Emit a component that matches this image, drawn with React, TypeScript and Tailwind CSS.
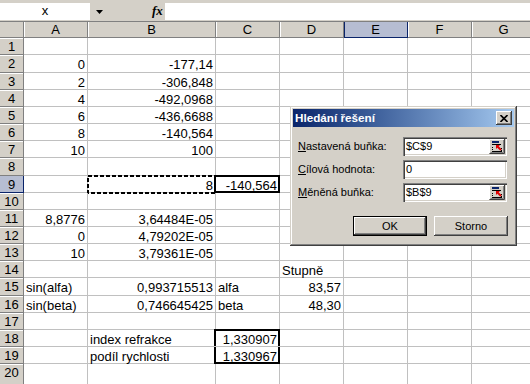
import React from "react";

type Cell = { v: string; al: "l" | "r" };

const COLS = ["A", "B", "C", "D", "E", "F", "G"];
const COL_W: Record<string, string> = {
  A: "w-[64px]",
  B: "w-[128px]",
  C: "w-[64px]",
  D: "w-[64px]",
  E: "w-[64px]",
  F: "w-[64px]",
  G: "w-[64px]",
};

// row heights tuned to the screenshot (zoom is not exactly 100%), last row runs off the page
const ROW_H = ["h-[17px]", "h-[18px]", "h-[17px]", "h-[17px]", "h-[17px]", "h-[17px]", "h-[17px]", "h-[18px]", "h-[17px]", "h-[17px]",
  "h-[17px]", "h-[17px]", "h-[17px]", "h-[17px]", "h-[18px]", "h-[17px]", "h-[17px]", "h-[17px]", "h-[17px]", "h-[22px]"];

const r = (v: string): Cell => ({ v, al: "r" });
const l = (v: string): Cell => ({ v, al: "l" });

const data: Record<number, Record<string, Cell>> = {
  2: { A: r("0"), B: r("-177,14") },
  3: { A: r("2"), B: r("-306,848") },
  4: { A: r("4"), B: r("-492,0968") },
  5: { A: r("6"), B: r("-436,6688") },
  6: { A: r("8"), B: r("-140,564") },
  7: { A: r("10"), B: r("100") },
  9: { B: r("8"), C: r("-140,564") },
  11: { A: r("8,8776"), B: r("3,64484E-05") },
  12: { A: r("0"), B: r("4,79202E-05") },
  13: { A: r("10"), B: r("3,79361E-05") },
  14: { D: l("Stupně") },
  15: { A: l("sin(alfa)"), B: r("0,993715513"), C: l("alfa"), D: r("83,57") },
  16: { A: l("sin(beta)"), B: r("0,746645425"), C: l("beta"), D: r("48,30") },
  18: { B: l("index refrakce"), C: r("1,330907") },
  19: { B: l("podíl rychlosti"), C: r("1,330967") },
};

const FormulaBar = () => (
  <div className="flex h-[21px] bg-[#d4d0c8] pt-[3px]">
    <div className="h-[17px] w-[90px] shrink-0 bg-white text-center text-[13px] leading-[16px]">x</div>
    <div className="relative h-[17px] w-[75px] shrink-0">
      <svg className="absolute left-[6px] top-[7px]" width="7" height="4" viewBox="0 0 7 4">
        <polygon points="0,0 7,0 3.5,4" fill="#000" />
      </svg>
      <span className="absolute left-[62px] top-[0px] font-['Liberation_Serif',serif] text-[13px] font-bold italic leading-[16px]">
        fx
      </span>
    </div>
    <div className="h-[17px] flex-1 bg-white" />
  </div>
);

const HeaderRow = () => (
  <div className="flex h-[17px] border-t border-[#808080] bg-[#d4d0c8]">
    <div className="w-[24px] shrink-0 border-r border-b border-[#808080]" />
    {COLS.map((c) => (
      <div
        key={c}
        className={`${COL_W[c]} shrink-0 border-b text-center text-[13px] leading-[15px] ${
          c === "E"
            ? "border-r border-[#0a246a] bg-[#b6bdd2] shadow-[inset_1px_0_0_#0a246a]"
            : "border-r border-[#808080] shadow-[inset_1px_0_0_#ffffff]"
        }`}
      >
        {c}
      </div>
    ))}
  </div>
);

const GridRow = ({ n, h }: { n: number; h: string }) => {
  const row = data[n] || {};
  return (
    <div className={`flex ${h}`}>
      <div
        className={`flex w-[24px] shrink-0 items-start justify-center border-r border-b pt-[1px] text-[13px] leading-[15px] ${
          n === 9 ? "border-[#0a246a] bg-[#b6bdd2]" : "border-[#808080] bg-[#d4d0c8] shadow-[inset_0_1px_0_#ffffff]"
        }`}
      >
        {n}
      </div>
      {COLS.map((c) => {
        const cell = row[c];
        return (
          <div
            key={c}
            className={`relative flex ${COL_W[c]} shrink-0 items-start border-r border-b border-[#c0c0c0] pt-[5px] text-[13px] whitespace-nowrap ${
              cell?.al === "r" ? "justify-end pr-[2px]" : "pl-[2px]"
            }`}
          >
            {cell && <span className="leading-[10px]">{cell.v}</span>}
            {n === 9 && c === "B" && (
              <svg className="absolute left-[-1px] top-[-1px]" width="129" height="19" viewBox="0 0 129 19">
                <rect x="1" y="1" width="127" height="17" fill="none" stroke="#000" strokeWidth="2" strokeDasharray="4 2" />
              </svg>
            )}
            {n === 9 && c === "C" && (
              <div className="absolute -top-[1px] -right-[1px] -bottom-[1px] -left-[2px] border-2 border-black" />
            )}
            {n === 18 && c === "C" && (
              <div className="absolute -top-[1px] -right-[1px] bottom-0 -left-[2px] border-2 border-b-0 border-black" />
            )}
            {n === 19 && c === "C" && (
              <div className="absolute top-0 -right-[1px] -bottom-[1px] -left-[2px] border-2 border-t-0 border-black" />
            )}
          </div>
        );
      })}
    </div>
  );
};

const RefIcon = () => (
  <svg width="16" height="15" viewBox="0 0 16 15">
    <rect width="16" height="15" fill="#d4d0c8" />
    <path d="M0.5 14V0.5H15" stroke="#fff" fill="none" />
    <path d="M0.5 14.5H15.5V0" stroke="#404040" fill="none" />
    <path d="M1.5 13.5H14.5V1" stroke="#808080" fill="none" />
    <rect x="3" y="2" width="7" height="2" fill="#0a246a" />
    <rect x="3" y="5" width="9" height="1" fill="#000" />
    <rect x="3" y="8" width="1" height="1" fill="#000" />
    <rect x="3" y="10" width="1" height="1" fill="#000" />
    <rect x="3" y="12" width="10" height="1" fill="#000" />
    <rect x="12" y="9" width="1" height="1" fill="#000" />
    <rect x="12" y="11" width="1" height="1" fill="#000" />
    <polygon points="7,6 11,6 7,10" fill="#e00000" />
    <path d="M8.5 7.5L12 11" stroke="#e00000" strokeWidth="2" />
  </svg>
);

const CloseBtn = () => (
  <div className="flex h-[14px] w-[16px] items-center justify-center bg-[#d4d0c8] shadow-[inset_-1px_-1px_0_#404040,inset_1px_1px_0_#ffffff,inset_-2px_-2px_0_#808080]">
    <svg width="8" height="7" viewBox="0 0 8 7">
      <path d="M0.5 0L7.5 7M7.5 0L0.5 7" stroke="#000" strokeWidth="1.6" />
    </svg>
  </div>
);

const Field = ({ label, value, refBtn }: { label: React.ReactNode; value: string; refBtn?: boolean }) => (
  <div className="flex h-[19px] items-center">
    <div className="w-[105px] shrink-0 text-[11px]">{label}</div>
    <div className="flex h-[19px] w-[104px] shrink-0 items-center justify-between bg-white pl-[3px] pr-[2px] shadow-[inset_1px_1px_0_#808080,inset_2px_2px_0_#404040,inset_-1px_-1px_0_#ffffff,inset_-2px_-2px_0_#d4d0c8]">
      <span className="text-[11px] leading-[13px]">{value}</span>
      {refBtn && <RefIcon />}
    </div>
  </div>
);

const Button = ({ children, isDefault }: { children: React.ReactNode; isDefault?: boolean }) => (
  <div
    className={`flex h-[20px] w-[74px] items-center justify-center bg-[#d4d0c8] text-[11px] ${
      isDefault
        ? "shadow-[inset_0_0_0_1px_#000000,inset_-2px_-2px_0_#404040,inset_2px_2px_0_#ffffff,inset_-3px_-3px_0_#808080]"
        : "shadow-[inset_-1px_-1px_0_#404040,inset_1px_1px_0_#ffffff,inset_-2px_-2px_0_#808080]"
    }`}
  >
    {children}
  </div>
);

const SolverDialog = () => (
  <div className="absolute left-[290px] top-[106px] h-[140px] w-[227px] bg-[#d4d0c8] p-[3px] shadow-[inset_-1px_-1px_0_#404040,inset_1px_1px_0_#d4d0c8,inset_-2px_-2px_0_#808080,inset_2px_2px_0_#ffffff]">
    <div className="flex h-[18px] items-center justify-between bg-linear-to-r from-[#0a246a] to-[#a6caf0] pr-[2px] pl-[2px]">
      <span className="text-[11.7px] font-bold text-white">Hledání řešení</span>
      <CloseBtn />
    </div>
    <div className="flex flex-col gap-[4px] pt-[10px] pl-[5px]">
      <Field
        label={
          <>
            <span className="underline">N</span>astavená buňka:
          </>
        }
        value="$C$9"
        refBtn
      />
      <Field
        label={
          <>
            <span className="underline">C</span>ílová hodnota:
          </>
        }
        value="0"
      />
      <Field
        label={
          <>
            <span className="underline">M</span>ěněná buňka:
          </>
        }
        value="$B$9"
        refBtn
      />
    </div>
    <div className="mt-[14px] flex justify-end gap-[7px] pr-[6px]">
      <Button isDefault>OK</Button>
      <Button>Storno</Button>
    </div>
  </div>
);

export default function App() {
  return (
    <div className="relative h-[384px] w-[530px] overflow-hidden bg-white font-['Liberation_Sans',Arial,sans-serif] text-black">
      <FormulaBar />
      <HeaderRow />
      {ROW_H.map((h, i) => (
        <GridRow key={i} n={i + 1} h={h} />
      ))}
      <SolverDialog />
    </div>
  );
}
